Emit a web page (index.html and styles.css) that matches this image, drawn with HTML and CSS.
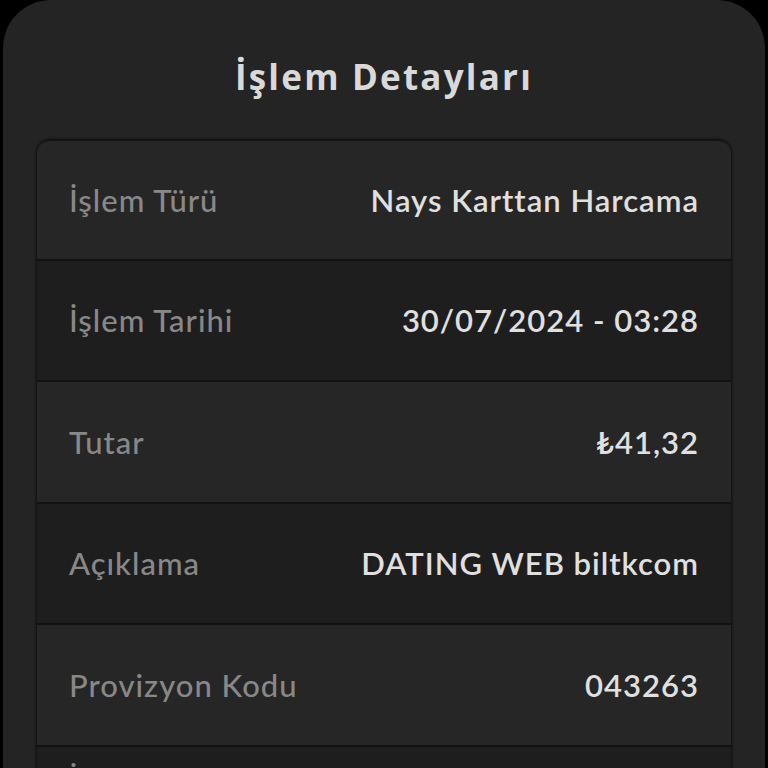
FILE: index.html
```html
<!DOCTYPE html>
<html lang="tr">
<head>
<meta charset="utf-8">
<title>İşlem Detayları</title>
<link rel="stylesheet" href="styles.css">
</head>
<body>
<div class="screen">
  <h1 class="title">İşlem Detayları</h1>
  <div class="card">
    <div class="row light first"><span class="label">İşlem Türü</span><span class="value">Nays Karttan Harcama</span></div>
    <div class="row dark"><span class="label">İşlem Tarihi</span><span class="value">30/07/2024 - 03:28</span></div>
    <div class="row light"><span class="label">Tutar</span><span class="value">₺41,32</span></div>
    <div class="row dark"><span class="label">Açıklama</span><span class="value">DATING WEB biltkcom</span></div>
    <div class="row light"><span class="label">Provizyon Kodu</span><span class="value">043263</span></div>
    <div class="row dark stacked"><span class="label">İşlem Durumu</span><span class="value">Başarılı</span></div>
  </div>
</div>
</body>
</html>
```
FILE: styles.css
```css
html, body {
  margin: 0;
  padding: 0;
  background: #000;
  height: 768px;
  overflow: hidden;
}
body {
  font-family: "Lato", "Noto Sans", sans-serif;
}
.screen {
  margin: 0 3px;
  background: #242424;
  border-radius: 48px 48px 0 0;
  height: 768px;
  padding: 0 33px;
  box-sizing: border-box;
  overflow: hidden;
}
.title {
  margin: 0;
  padding-top: 54px;
  height: 139px;
  box-sizing: border-box;
  text-align: center;
  color: #d9d9d9;
  font-family: "Open Sans", "Lato", sans-serif;
  font-size: 35px;
  font-weight: 700;
  line-height: 46px;
  letter-spacing: 2.2px;
}
.card {
  border: 1px solid #141414;
  border-top-width: 2px;
  border-radius: 14px;
  overflow: hidden;
  box-shadow: 0 0 3px rgba(0,0,0,0.6);
}
.row {
  display: flex;
  justify-content: space-between;
  align-items: center;
  height: 119.5px;
  padding: 0 32px;
  border-bottom: 2px solid #121212;
}
.row.first { height: 117.5px; }
.row.light { background: #262626; }
.row.dark { background: #1e1e1e; }
.row.stacked {
  flex-direction: column;
  align-items: flex-start;
  justify-content: flex-start;
  padding-top: 13px;
  gap: 8px;
}
.label {
  color: #888888;
  font-size: 31px;
  font-weight: 500;
  letter-spacing: 1px;
}
.value {
  color: #e0e0e0;
  font-size: 31px;
  font-weight: 600;
  letter-spacing: 1px;
}
```
